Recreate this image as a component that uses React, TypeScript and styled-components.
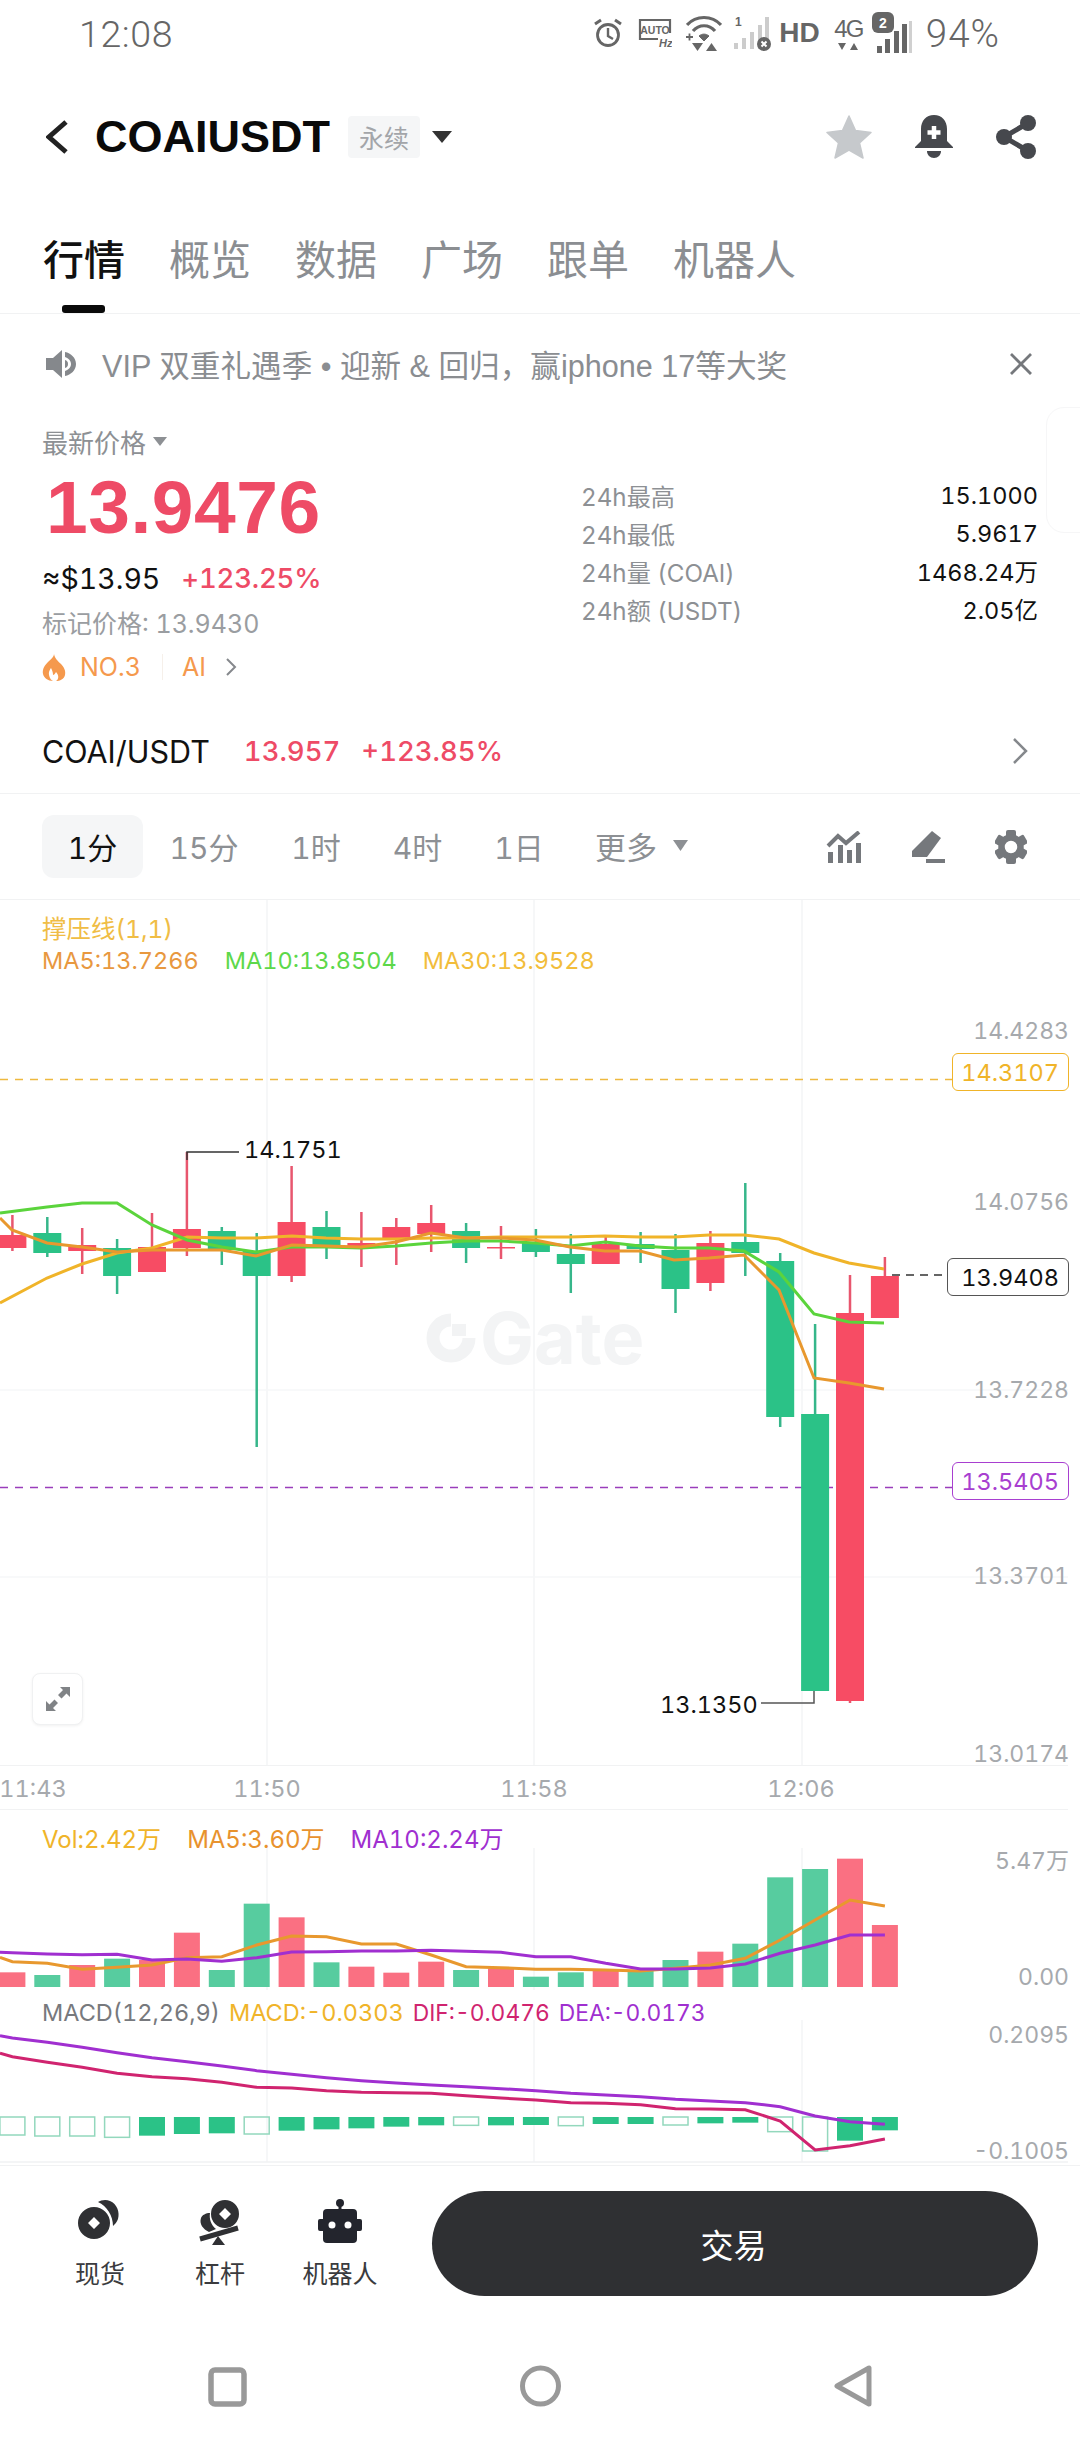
import React from 'react';
import styled, { createGlobalStyle } from 'styled-components';

const GlobalStyle = createGlobalStyle`
  html, body {
    margin: 0;
    padding: 0;
    background: #fff;
  }
  * { box-sizing: border-box; }
  body {
    font-family: Inter, "Noto Sans CJK SC", sans-serif;
    font-variant-numeric: tabular-nums;
  }
`;

const Page = styled.div`
  position: relative;
  width: 1080px;
  height: 2448px;
  overflow: hidden;
  background: #fff;
`;

/* status bar */
const StatusBar = styled.div`
  display: flex;
  align-items: center;
  height: 66px;
  padding: 0 80px 0 79px;
  color: #666;
`;

const Clock = styled.span`
  font-family: Roboto, sans-serif;
  font-weight: 300;
  font-size: 37.5px;
  letter-spacing: 0.6px;
  padding-top: 2px;
`;

const StatusIcons = styled.div`
  display: flex;
  align-items: center;
  margin-left: auto;
`;

const StatusIcon = styled.svg<{ $ml?: number }>`
  display: block;
  flex: none;
  margin-left: ${({ $ml }) => $ml ?? 0}px;
`;

const HdText = styled.span`
  font-family: "Liberation Sans", sans-serif;
  font-weight: 700;
  font-size: 28px;
  margin-left: 8px;
`;

const NetWrap = styled.div`
  display: flex;
  flex-direction: column;
  align-items: center;
  width: 29px;
  margin-left: 14px;
  margin-top: 2px;
`;

const NetText = styled.span`
  font-family: "Liberation Sans", sans-serif;
  font-size: 24px;
  line-height: 20px;
  letter-spacing: -2px;
`;

const Battery = styled.span`
  font-family: Roboto, sans-serif;
  font-weight: 300;
  font-size: 38.5px;
  margin-left: 14px;
  letter-spacing: 1px;
`;

/* header */
const Header = styled.div`
  display: flex;
  align-items: center;
  height: 142px;
  padding: 0 43px 0 46px;
`;

const Title = styled.h1`
  margin: 0 0 0 27px;
  font-family: "Liberation Sans", sans-serif;
  font-weight: 700;
  font-size: 45px;
  color: #0a0a0a;
`;

const PerpTag = styled.span`
  display: flex;
  align-items: center;
  justify-content: center;
  width: 72px;
  height: 42px;
  margin-left: 18px;
  border-radius: 4px;
  background: #f5f6f7;
  color: #a3a5a9;
  font-size: 25px;
`;

const HeaderActions = styled.div`
  display: flex;
  align-items: center;
  margin-left: auto;
  gap: 41px;
`;

/* tabs */
const TabRow = styled.div`
  display: flex;
  gap: 44px;
  height: 106px;
  padding: 27px 0 0 43px;
  border-bottom: 1px solid #f1f2f3;
`;

const Tab = styled.div<{ $active?: boolean }>`
  position: relative;
  height: 50px;
  font-size: 41px;
  line-height: 50px;
  font-weight: ${({ $active }) => ($active ? 500 : 400)};
  color: ${({ $active }) => ($active ? '#111' : '#8b8e92')};

  &::after {
    content: '';
    display: ${({ $active }) => ($active ? 'block' : 'none')};
    position: absolute;
    left: 19px;
    top: 70px;
    width: 43px;
    height: 8px;
    border-radius: 3px;
    background: #0a0a0a;
  }
`;

/* notice */
const Notice = styled.div`
  display: flex;
  align-items: center;
  height: 100px;
  padding: 0 48px 0 46px;
`;

const NoticeText = styled.span`
  margin-left: 25px;
  font-family: "Liberation Sans", "Noto Sans CJK SC", sans-serif;
  font-size: 30.6px;
  color: #8a8d91;
`;

const NoticeClose = styled.svg`
  margin-left: auto;
  display: block;
`;

/* price block */
const PriceSection = styled.div`
  position: relative;
  display: flex;
  height: 295px;
  padding: 12px 42px 0;
`;

const PriceLeft = styled.div`
  display: flex;
  flex-direction: column;
  width: 540px;
`;

const PriceLabel = styled.div`
  display: flex;
  align-items: center;
  gap: 7px;
  height: 30px;
  font-size: 26px;
  color: #8d9094;
`;

const LastPrice = styled.div`
  height: 76px;
  margin-top: 13px;
  font-family: "Liberation Sans", sans-serif;
  font-weight: 700;
  font-size: 75px;
  line-height: 76px;
  letter-spacing: 0.5px;
  padding-left: 4px;
  color: #ee4b66;
`;

const FiatRow = styled.div`
  display: flex;
  align-items: center;
  gap: 21px;
  height: 36px;
  margin-top: 15px;
  font-size: 28.5px;
  color: #111;
`;

const Change = styled.span`
  color: #ee4b66;
  font-weight: 500;
  font-size: 27.5px;
  letter-spacing: -0.2px;
`;

const MarkPrice = styled.div`
  height: 30px;
  margin-top: 13px;
  font-size: 25px;
  line-height: 30px;
  color: #9a9da1;
`;

const RankRow = styled.div`
  display: flex;
  align-items: center;
  height: 36px;
  margin-top: 10px;
  font-size: 25px;
  color: #f5994d;
`;

const RankDivider = styled.span`
  width: 1px;
  height: 26px;
  margin: 0 19px 0 21px;
  background: #f6f0ea;
`;

const StatList = styled.div`
  display: flex;
  flex-direction: column;
  flex: 1;
  padding-top: 50px;
`;

const StatRow = styled.div`
  display: flex;
  justify-content: space-between;
  align-items: center;
  height: 38px;
`;

const StatName = styled.span`
  font-size: 24.2px;
  color: #8d9094;
  margin-left: -1px;
`;

const StatValue = styled.span`
  font-size: 23.5px;
  color: #111;
`;

const EdgeHint = styled.div`
  position: absolute;
  right: -20px;
  top: -7px;
  width: 54px;
  height: 126px;
  border: 1px solid #f6f6f7;
  border-radius: 18px;
`;

/* spot pair */
const PairRow = styled.div`
  display: flex;
  align-items: center;
  height: 85px;
  padding: 0 52px 0 42px;
  border-bottom: 1px solid #f1f2f3;
  font-size: 27.5px;
`;

const PairName = styled.span`
  font-size: 30.5px;
  color: #111;
  margin-right: 34px;
`;

const PairPrice = styled.span`
  color: #ee4b66;
  font-weight: 500;
  margin-right: 21px;
`;

const PairChevron = styled.svg`
  display: block;
  margin-left: auto;
`;

/* period bar */
const PeriodBar = styled.div`
  position: relative;
  display: flex;
  align-items: center;
  height: 106px;
  padding: 0 53px 0 42px;
  border-bottom: 1px solid #f1f2f3;
`;

const Period = styled.div<{ $active?: boolean; $w: number }>`
  display: flex;
  align-items: center;
  justify-content: center;
  width: ${({ $w }) => $w}px;
  height: 63px;
  padding-bottom: 2px;
  border-radius: 12px;
  font-size: 30px;
  background: ${({ $active }) => ($active ? '#f5f6f7' : 'transparent')};
  color: ${({ $active }) => ($active ? '#111' : '#8d9094')};
`;

const MorePeriod = styled(Period)`
  gap: 16px;
  margin-left: 25px;
  font-size: 31px;
  justify-content: flex-start;
`;

const ToolIcons = styled.div`
  display: flex;
  align-items: center;
  gap: 50px;
  margin-left: auto;
`;

/* chart panes */
const Pane = styled.div<{ $h: number }>`
  position: relative;
  height: ${({ $h }) => $h}px;
`;

const PaneSvg = styled.svg`
  display: block;
  position: absolute;
  left: 0;
  top: 0;
`;

const Legend = styled.div<{ $top: number; $size?: number }>`
  position: absolute;
  left: 42px;
  top: ${({ $top }) => $top}px;
  display: flex;
  gap: 26px;
  height: 30px;
  align-items: center;
  font-size: ${({ $size }) => $size ?? 23.5}px;
  white-space: nowrap;
`;

const TightLegend = styled(Legend)`
  gap: 9px;
`;

const LegendItem = styled.span<{ $color: string; $size?: number }>`
  color: ${({ $color }) => $color};
  ${({ $size }) => ($size ? `font-size: ${$size}px;` : '')}
`;

const AxisLabel = styled.span<{ $top: number }>`
  position: absolute;
  right: 11px;
  top: ${({ $top }) => $top - 15}px;
  height: 30px;
  line-height: 30px;
  font-size: 23px;
  color: #a6a9ad;
`;

const PriceTag = styled.span<{ $top: number; $color: string; $w: number }>`
  position: absolute;
  right: 11px;
  top: ${({ $top }) => $top}px;
  width: ${({ $w }) => $w}px;
  height: 38px;
  display: flex;
  align-items: center;
  justify-content: flex-end;
  padding-right: 9px;
  background: #fff;
  border: 1px solid ${({ $color }) => $color};
  border-radius: 6px;
  font-size: 23.5px;
  color: ${({ $color }) => $color};
`;

const LastTag = styled(PriceTag)`
  color: #111;
`;

const PeakLabel = styled.span<{ $left: number; $top: number }>`
  position: absolute;
  left: ${({ $left }) => $left}px;
  top: ${({ $top }) => $top - 15}px;
  height: 30px;
  line-height: 30px;
  font-size: 23.5px;
  color: #111;
`;

const Watermark = styled.span`
  position: absolute;
  left: 480px;
  top: 400px;
  font-weight: 700;
  font-size: 72px;
  line-height: 76px;
  color: #f3f4f5;
`;

const ExpandButton = styled.div`
  position: absolute;
  left: 32px;
  top: 773px;
  width: 51px;
  height: 52px;
  display: flex;
  align-items: center;
  justify-content: center;
  background: #fff;
  border: 1px solid #f0f1f2;
  border-radius: 8px;
  box-shadow: 0 1px 3px rgba(0, 0, 0, 0.06);
`;

const TimeAxis = styled.div`
  position: relative;
  width: 1068px;
  height: 45px;
  border-top: 1px solid #f1f2f3;
  border-bottom: 1px solid #f1f2f3;
`;

const TimeLabel = styled.span<{ $x: number }>`
  position: absolute;
  left: ${({ $x }) => $x}px;
  top: 8px;
  transform: translateX(-50%);
  font-size: 23.5px;
  line-height: 30px;
  color: #a6a9ad;
`;

/* bottom actions */
const BottomBar = styled.div`
  display: flex;
  height: 155px;
  padding: 0 42px 0 40px;
  border-top: 1px solid #f1f2f3;
`;

const BottomItem = styled.div`
  display: flex;
  flex-direction: column;
  align-items: center;
  width: 120px;
  padding-top: 33px;
  font-size: 25px;
  line-height: 30px;
  color: #3a3b3e;
`;

const BottomLabel = styled.span`
  margin-top: 14px;
  white-space: nowrap;
`;

const TradeButton = styled.div`
  display: flex;
  align-items: center;
  justify-content: center;
  width: 606px;
  height: 105px;
  margin-top: 25px;
  margin-left: auto;
  padding-right: 3px;
  border-radius: 53px;
  background: #2f3033;
  color: #fff;
  font-size: 33px;
`;

const NavBar = styled.div`
  display: flex;
  gap: 273px;
  height: 127px;
  padding: 45px 0 0 207px;
`;

/* chart data, in page pixels */
const center = (i: number) => 12.4 + 34.9 * i;
const UP = '#f74c64';
const DOWN = '#2bc287';
const VOL_UP = '#fa7082';
const VOL_DOWN = '#57cc9f';

// [up, top, bottom, high, low]
const candles: [boolean, number, number, number, number][] = [
  [true, 1235, 1248, 1215, 1251],
  [false, 1233, 1253, 1217, 1257],
  [true, 1245, 1251, 1228, 1274],
  [false, 1248, 1276, 1239, 1294],
  [true, 1247, 1272, 1213, 1272],
  [true, 1229, 1248, 1152, 1256],
  [false, 1231, 1250, 1227, 1265],
  [false, 1251, 1276, 1233, 1447],
  [true, 1222, 1276, 1166, 1282],
  [false, 1227, 1247, 1211, 1259],
  [true, 1243, 1247, 1212, 1267],
  [true, 1227, 1240, 1218, 1265],
  [true, 1223, 1234, 1205, 1252],
  [false, 1231, 1248, 1223, 1263],
  [true, 1247, 1248, 1226, 1259],
  [false, 1243, 1252, 1229, 1257],
  [false, 1254, 1264, 1234, 1293],
  [true, 1244, 1264, 1237, 1264],
  [false, 1244, 1249, 1232, 1263],
  [false, 1250, 1289, 1234, 1313],
  [true, 1243, 1283, 1231, 1291],
  [false, 1242, 1253, 1183, 1276],
  [false, 1261, 1417, 1253, 1427],
  [false, 1414, 1691, 1324, 1691],
  [true, 1313, 1701, 1275, 1703],
  [true, 1276, 1318, 1257, 1318],
];

const ma10 = '0,1213 47,1207 82,1203 117,1203 152,1225 187,1240 222,1247 256,1252 292,1247 326,1247 361,1248 396,1246 431,1243 466,1241 501,1241 535,1243 570,1246 605,1242 640,1246 674,1248 709,1248 744,1251 779,1272 814,1314 849,1322 884,1323';
const ma5 = '0,1218 12,1230 47,1243 82,1247 117,1252 152,1250 187,1250 222,1250 256,1256 292,1245 326,1246 361,1247 396,1242 431,1233 466,1238 501,1238 535,1240 570,1247 605,1251 640,1251 674,1260 709,1258 744,1255 779,1290 814,1378 849,1383 884,1389';
const ma30 = '0,1303 47,1278 82,1264 117,1253 152,1248 187,1237 222,1238 256,1238 292,1236 326,1238 361,1239 396,1239 431,1238 466,1238 501,1237 535,1237 570,1237 605,1236 640,1237 674,1237 709,1235 744,1235 779,1239 814,1253 849,1263 884,1269';

const zy = (z: number) => 1660 + z / 3;
const volTops = [937, 945, 915, 896, 900, 818, 930, 731, 772, 907, 920, 938, 905, 930, 925, 950, 937, 928, 930, 900, 875, 851, 652, 627, 596, 795];
const volUp = [1, 0, 1, 0, 1, 1, 0, 0, 1, 0, 1, 1, 1, 0, 1, 0, 0, 1, 0, 0, 1, 0, 0, 0, 1, 1];
const series = (zs: number[], first?: number) => {
  const pts = zs.map((z, i) => `${center(i).toFixed(1)},${zy(z).toFixed(1)}`);
  return (first !== undefined ? [`0,${zy(first).toFixed(1)}`, ...pts] : pts).join(' ');
};
const volMa5 = series([905, 910, 928, 922, 915, 893, 890, 855, 828, 830, 852, 852, 885, 920, 923, 928, 928, 930, 933, 925, 915, 895, 840, 780, 720, 738], 892);
const volMa10 = series([878, 882, 884, 883, 900, 897, 904, 893, 876, 875, 873, 873, 871, 874, 877, 890, 890, 910, 927, 927, 924, 912, 880, 855, 825, 825], 877);

const dea = series([1134, 1147, 1162, 1178, 1193, 1205, 1218, 1232, 1243, 1253, 1262, 1269, 1275, 1280, 1286, 1292, 1300, 1305, 1310, 1318, 1323, 1328, 1340, 1368, 1385, 1393], 1127);
const dif = series([1190, 1207, 1222, 1240, 1250, 1256, 1267, 1282, 1284, 1292, 1297, 1298, 1300, 1307, 1314, 1320, 1328, 1330, 1334, 1346, 1347, 1349, 1383, 1470, 1457, 1437], 1180);

const macdBottoms = [1425, 1428, 1428, 1432, 1427, 1422, 1420, 1422, 1412, 1408, 1405, 1400, 1396, 1396, 1396, 1395, 1397, 1392, 1392, 1395, 1390, 1388, 1415, 1473, 1442, 1411];
const macdHollow = [1, 1, 1, 1, 0, 0, 0, 1, 0, 0, 0, 0, 0, 1, 0, 0, 1, 0, 0, 1, 0, 0, 1, 1, 0, 0];

const GridV: React.FC<{ from: number; to: number }> = ({ from, to }) => (
  <>
    {[267, 534, 802].map((x) => (
      <line key={x} x1={x} x2={x} y1={from} y2={to} stroke="#f3f4f6" strokeWidth="1.5" />
    ))}
  </>
);

const MainChart: React.FC = () => (
  <PaneSvg width="1080" height="865" viewBox="0 900 1080 865">
    <GridV from={900} to={1765} />
    {[1390, 1577].map((y) => (
      <line key={y} x1="0" x2="1068" y1={y} y2={y} stroke="#f6f7f8" strokeWidth="1.5" />
    ))}
    {/* gate watermark mark */}
    <path d="M451 1320a18 18 0 1 0 18 18" fill="none" stroke="#f2f3f4" strokeWidth="13" />
    <rect x="452" y="1324" width="14" height="12" fill="#f2f3f4" />
    <line x1="0" x2="953" y1="1079.5" y2="1079.5" stroke="#eeb93f" strokeWidth="1.5" strokeDasharray="8 7" />
    <line x1="0" x2="953" y1="1487.5" y2="1487.5" stroke="#9a3dbb" strokeWidth="1.5" strokeDasharray="8 7" />
    <line x1="892" x2="947" y1="1275" y2="1275" stroke="#333" strokeWidth="1.5" strokeDasharray="8 6" />
    {candles.map(([up, top, bottom, high, low], i) => {
      const x = center(i);
      const color = up ? UP : DOWN;
      return (
        <g key={i}>
          <line x1={x} x2={x} y1={high} y2={low} stroke={up ? '#e8566e' : '#36b68a'} strokeWidth="2.5" />
          <rect x={x - 14} y={top} width="28" height={Math.max(bottom - top, 1.5)} fill={color} />
        </g>
      );
    })}
    <polyline points={ma30} fill="none" stroke="#f0b429" strokeWidth="3" />
    <polyline points={ma10} fill="none" stroke="#5bd43c" strokeWidth="3" />
    <polyline points={ma5} fill="none" stroke="#e8982e" strokeWidth="3" />
    <polyline points="187,1160 187,1152 239,1152" fill="none" stroke="#333" strokeWidth="1.5" />
    <polyline points="761,1703 814,1703 814,1691" fill="none" stroke="#555" strokeWidth="1.5" />
  </PaneSvg>
);

const VolumeChart: React.FC = () => (
  <PaneSvg width="1080" height="180" viewBox="0 1810 1080 180">
    <GridV from={1848} to={1990} />
    {volTops.map((z, i) => (
      <rect key={i} x={center(i) - 13} y={zy(z)} width="26" height={1987 - zy(z)} fill={volUp[i] ? VOL_UP : VOL_DOWN} />
    ))}
    <polyline points={volMa5} fill="none" stroke="#e8982e" strokeWidth="3" />
    <polyline points={volMa10} fill="none" stroke="#a02fd0" strokeWidth="3" />
  </PaneSvg>
);

const MacdChart: React.FC = () => (
  <PaneSvg width="1080" height="175" viewBox="0 1990 1080 175">
    <GridV from={2020} to={2162} />
    <line x1="0" x2="1068" y1="2162" y2="2162" stroke="#f1f2f3" strokeWidth="1.5" />
    {macdBottoms.map((z, i) =>
      macdHollow[i] ? (
        <rect key={i} x={center(i) - 12.5} y={2117} width="25" height={zy(z) - 2117} fill="none" stroke="#93d8bd" strokeWidth="1.5" />
      ) : (
        <rect key={i} x={center(i) - 13} y={2117} width="26" height={zy(z) - 2117} fill={DOWN} />
      ),
    )}
    <polyline points={dea} fill="none" stroke="#a02fd0" strokeWidth="3" />
    <polyline points={dif} fill="none" stroke="#d0246f" strokeWidth="3" />
  </PaneSvg>
);

const App: React.FC = () => (
  <Page>
    <GlobalStyle />
    <StatusBar>
      <Clock>12:08</Clock>
      <StatusIcons>
        {/* alarm */}
        <StatusIcon width="30" height="30" viewBox="0 0 30 30" fill="none" stroke="#666" strokeWidth="2.8">
          <circle cx="15" cy="17" r="10.5" />
          <polyline points="15,10 15,18 20,21" strokeWidth="2.4" />
          <path d="M2 6l6-4M28 6l-6-4" strokeWidth="3" />
        </StatusIcon>
        {/* auto hz */}
        <StatusIcon $ml={15} width="34" height="30" viewBox="0 0 34 30" fill="none">
          <path d="M20 21H2V2h30v13" stroke="#666" strokeWidth="2.2" />
          <text x="17" y="16" textAnchor="middle" fontFamily="Liberation Sans" fontWeight="700" fontSize="10.5" fill="#666">AUTO</text>
          <text x="21" y="29" fontFamily="Liberation Sans" fontWeight="700" fontStyle="italic" fontSize="11" fill="#666">Hz</text>
        </StatusIcon>
        {/* wifi */}
        <StatusIcon $ml={14} width="36" height="38" viewBox="0 0 36 38" fill="none" stroke="#666" strokeWidth="3.2">
          <path d="M1 11C10 1 26 1 35 11" />
          <path d="M7 17C13 10 23 10 29 17" />
          <path d="M13 22c3-2.5 7-2.5 10 0l-5 5z" fill="#666" strokeWidth="1" />
          <path d="M0 23h7M3.5 19.5v7" strokeWidth="1.8" />
          <path d="M6 29h11l-5.5 8zM20 37h11l-5.5-8z" fill="#666" stroke="none" />
        </StatusIcon>
        {/* sim 1 */}
        <StatusIcon $ml={12} width="37" height="36" viewBox="0 0 37 36">
          <text x="1" y="11" fontFamily="Liberation Sans" fontWeight="700" fontSize="12" fill="#666">1</text>
          <rect x="0" y="28" width="4" height="6" fill="#ccc" />
          <rect x="8" y="23" width="4" height="11" fill="#ccc" />
          <rect x="16" y="17" width="4" height="17" fill="#ccc" />
          <rect x="24" y="10" width="4" height="24" fill="#ccc" />
          <rect x="31" y="2" width="4" height="24" fill="#ccc" />
          <circle cx="30" cy="29" r="7" fill="#666" />
          <path d="M27.5 26.5l5 5M32.5 26.5l-5 5" stroke="#fff" strokeWidth="2" />
        </StatusIcon>
        <HdText>HD</HdText>
        <NetWrap>
          <NetText>4G</NetText>
          <svg width="24" height="8" viewBox="0 0 24 8" style={{ display: 'block', marginTop: 3 }}>
            <path d="M2 1h8l-4 7zM14 8h8l-4-7z" fill="#666" />
          </svg>
        </NetWrap>
        {/* sim 2 */}
        <StatusIcon $ml={9} width="40" height="42" viewBox="0 0 40 42">
          <rect x="5" y="34" width="5" height="7" fill="#666" />
          <rect x="13" y="27" width="5" height="14" fill="#666" />
          <rect x="22" y="19" width="5" height="22" fill="#666" />
          <rect x="30" y="12" width="5" height="29" fill="#666" />
          <rect x="37" y="9" width="3" height="32" fill="#d0d0d0" />
          <rect x="0" y="0" width="22" height="21" rx="6" fill="#666" />
          <text x="11" y="16" textAnchor="middle" fontFamily="Liberation Sans" fontWeight="700" fontSize="14" fill="#fff">2</text>
        </StatusIcon>
        <Battery>94%</Battery>
      </StatusIcons>
    </StatusBar>

    <Header>
      <svg width="22" height="34" viewBox="0 0 22 34" style={{ display: 'block' }}>
        <polyline points="20,2 3,17 20,32" fill="none" stroke="#222" strokeWidth="5" />
      </svg>
      <Title>COAIUSDT</Title>
      <PerpTag>永续</PerpTag>
      <svg width="20" height="12" viewBox="0 0 20 12" style={{ display: 'block', marginLeft: 12 }}>
        <path d="M0 0h20L10 12z" fill="#333" />
      </svg>
      <HeaderActions>
        <svg width="46" height="44" viewBox="0 0 46 44" style={{ marginRight: 1 }}>
          <path d="M23 1l6.5 14.5L45 17.5 33.5 28 37 43 23 35 9 43l3.5-15L1 17.5l15.5-2z" fill="#c6c9cc" stroke="#c6c9cc" strokeWidth="1.5" strokeLinejoin="round" />
        </svg>
        <svg width="40" height="44" viewBox="0 0 40 44">
          <path d="M20 0c-8 0-13 6-13 14v12L1 32v1h38v-1l-6-6V14C33 6 28 0 20 0z" fill="#46484d" />
          <path d="M13 36h14c0 4-3 7-7 7s-7-3-7-7z" fill="#46484d" />
          <path d="M20 11v13M13.5 17.5h13" stroke="#fff" strokeWidth="4.5" />
        </svg>
        <svg width="42" height="44" viewBox="0 0 42 44">
          <path d="M33 8L9 22l24 14" fill="none" stroke="#46484d" strokeWidth="5" />
          <circle cx="33" cy="8" r="8" fill="#46484d" />
          <circle cx="9" cy="22" r="8" fill="#46484d" />
          <circle cx="33" cy="36" r="8" fill="#46484d" />
        </svg>
      </HeaderActions>
    </Header>

    <TabRow>
      <Tab $active>行情</Tab>
      <Tab>概览</Tab>
      <Tab>数据</Tab>
      <Tab>广场</Tab>
      <Tab>跟单</Tab>
      <Tab>机器人</Tab>
    </TabRow>

    <Notice>
      <svg width="31" height="28" viewBox="0 0 31 28" style={{ display: 'block', flex: 'none' }}>
        <path d="M0 8h7l9-8v28l-9-8H0z" fill="#85888c" />
        <path d="M19 2c6 1 11 6 11 12s-5 11-11 12v-5c3-1 6-3.5 6-7s-3-6-6-7z" fill="#85888c" />
        <path d="M19 10c2 .5 3 2 3 4s-1 3.5-3 4z" fill="#85888c" />
      </svg>
      <NoticeText>VIP 双重礼遇季 • 迎新 &amp; 回归，赢iphone 17等大奖</NoticeText>
      <NoticeClose width="22" height="22" viewBox="0 0 22 22">
        <path d="M1 1l20 20M21 1L1 21" stroke="#75787c" strokeWidth="2.8" />
      </NoticeClose>
    </Notice>

    <PriceSection>
      <PriceLeft>
        <PriceLabel>
          最新价格
          <svg width="14" height="9" viewBox="0 0 14 9"><path d="M0 0h14L7 9z" fill="#8d9094" /></svg>
        </PriceLabel>
        <LastPrice>13.9476</LastPrice>
        <FiatRow>
          <span>≈$13.95</span>
          <Change>+123.25%</Change>
        </FiatRow>
        <MarkPrice>标记价格: 13.9430</MarkPrice>
        <RankRow>
          <svg width="24" height="27" viewBox="0 0 24 27" style={{ display: 'block', marginRight: 14 }}>
            <path d="M12 0c1 5 4 7 7 10 3 3 5 7 4 11-1 4-5 6-9 6 3-2 3-6 0-9-1 2-2 3-3 3 0-3-1-5-2-7-2 3-3 5-1 10 1 2 2 2 3 3-5 0-9-3-10-7C0 15 3 11 6 8c3-3 6-5 6-8z" fill="#f5994d" />
          </svg>
          NO.3
          <RankDivider />
          AI
          <svg width="12" height="20" viewBox="0 0 12 20" style={{ display: 'block', marginLeft: 19 }}>
            <polyline points="2,2 10,10 2,18" fill="none" stroke="#85888c" strokeWidth="2" />
          </svg>
        </RankRow>
      </PriceLeft>
      <StatList>
        <StatRow><StatName>24h最高</StatName><StatValue>15.1000</StatValue></StatRow>
        <StatRow><StatName>24h最低</StatName><StatValue>5.9617</StatValue></StatRow>
        <StatRow><StatName>24h量 (COAI)</StatName><StatValue>1468.24万</StatValue></StatRow>
        <StatRow><StatName>24h额 (USDT)</StatName><StatValue>2.05亿</StatValue></StatRow>
      </StatList>
      <EdgeHint />
    </PriceSection>

    <PairRow>
      <PairName>COAI/USDT</PairName>
      <PairPrice>13.957</PairPrice>
      <PairPrice>+123.85%</PairPrice>
      <PairChevron width="16" height="26" viewBox="0 0 16 26">
        <polyline points="2,1 14,13 2,25" fill="none" stroke="#85888c" strokeWidth="2.5" />
      </PairChevron>
    </PairRow>

    <PeriodBar>
      <Period $active $w={101}>1分</Period>
      <Period $w={122}>15分</Period>
      <Period $w={102}>1时</Period>
      <Period $w={101}>4时</Period>
      <Period $w={102}>1日</Period>
      <MorePeriod $w={98}>
        更多
        <svg width="15" height="11" viewBox="0 0 15 11"><path d="M0 0h15L7.5 11z" fill="#8d9094" /></svg>
      </MorePeriod>
      <ToolIcons>
        <svg width="36" height="32" viewBox="0 0 36 32">
          <polyline points="2,15 12,5 20,12 33,1" fill="none" stroke="#75787c" strokeWidth="4" />
          <path d="M2 21h5v11H2zM12 14h5v18h-5zM21 19h5v13h-5zM30 12h5v20h-5z" fill="#75787c" />
        </svg>
        <svg width="33" height="32" viewBox="0 0 33 32">
          <path d="M20 0l9 7L15 26H0v-6z" fill="#75787c" />
          <rect x="14" y="28" width="19" height="4" fill="#75787c" />
        </svg>
        <svg width="32" height="34" viewBox="-16 -17 32 34">
          <g fill="#75787c">
            {[0, 60, 120, 180, 240, 300].map((a) => (
              <rect key={a} x="-5" y="-17" width="10" height="8" rx="2" transform={`rotate(${a})`} />
            ))}
          </g>
          <circle r="9.5" fill="none" stroke="#75787c" strokeWidth="6.5" />
        </svg>
      </ToolIcons>
    </PeriodBar>

    <Pane $h={865}>
      <MainChart />
      <Watermark>Gate</Watermark>
      <Legend $top={12}>
        <LegendItem $color="#f0bd45" $size={24.5}>撑压线(1,1)</LegendItem>
      </Legend>
      <Legend $top={45}>
        <LegendItem $color="#e8983f">MA5:13.7266</LegendItem>
        <LegendItem $color="#5dd84a">MA10:13.8504</LegendItem>
        <LegendItem $color="#f2bd3b">MA30:13.9528</LegendItem>
      </Legend>
      <AxisLabel $top={131}>14.4283</AxisLabel>
      <PriceTag $top={153} $w={117} $color="#f0b429">14.3107</PriceTag>
      <AxisLabel $top={302}>14.0756</AxisLabel>
      <LastTag $top={358} $w={122} $color="#555">13.9408</LastTag>
      <AxisLabel $top={490}>13.7228</AxisLabel>
      <PriceTag $top={562} $w={117} $color="#a83fd0">13.5405</PriceTag>
      <AxisLabel $top={676}>13.3701</AxisLabel>
      <AxisLabel $top={854}>13.0174</AxisLabel>
      <PeakLabel $left={244} $top={250}>14.1751</PeakLabel>
      <PeakLabel $left={660} $top={805}>13.1350</PeakLabel>
      <ExpandButton>
        <svg width="26" height="26" viewBox="0 0 26 26">
          <path d="M15 1h10v10l-3.5-3.5-5 5-3.5-3.5 5-5zM11 25H1V15l3.5 3.5 5-5 3.5 3.5-5 5z" fill="#808386" />
        </svg>
      </ExpandButton>
    </Pane>

    <TimeAxis>
      <TimeLabel $x={33}>11:43</TimeLabel>
      <TimeLabel $x={267}>11:50</TimeLabel>
      <TimeLabel $x={534}>11:58</TimeLabel>
      <TimeLabel $x={801}>12:06</TimeLabel>
    </TimeAxis>

    <Pane $h={180}>
      <VolumeChart />
      <Legend $top={12} $size={24}>
        <LegendItem $color="#f0b429">Vol:2.42万</LegendItem>
        <LegendItem $color="#e8922e">MA5:3.60万</LegendItem>
        <LegendItem $color="#a02fd0">MA10:2.24万</LegendItem>
      </Legend>
      <AxisLabel $top={51}>5.47万</AxisLabel>
      <AxisLabel $top={167}>0.00</AxisLabel>
    </Pane>

    <Pane $h={175}>
      <MacdChart />
      <TightLegend $top={7}>
        <LegendItem $color="#77797d">MACD(12,26,9)</LegendItem>
        <LegendItem $color="#f0b429">MACD:-0.0303</LegendItem>
        <LegendItem $color="#d0246f" $size={22.8}>DIF:-0.0476</LegendItem>
        <LegendItem $color="#a02fd0" $size={22.8}>DEA:-0.0173</LegendItem>
      </TightLegend>
      <AxisLabel $top={45}>0.2095</AxisLabel>
      <AxisLabel $top={161}>-0.1005</AxisLabel>
    </Pane>

    <BottomBar>
      <BottomItem>
        <svg width="46" height="46" viewBox="0 0 46 46">
          <path fillRule="evenodd" d="M17 8a16 16 0 1 1 0 32 16 16 0 0 1 0-32zM17 18l-6 6 6 6 6-6z" fill="#2f3033" />
          <path d="M21 3c3-2 8-3 12-1 7 3 10 11 8 18-1 3-3 5-5 7 0-10-6-20-15-24z" fill="#2f3033" />
        </svg>
        <BottomLabel>现货</BottomLabel>
      </BottomItem>
      <BottomItem>
        <svg width="46" height="46" viewBox="0 0 46 46">
          <path fillRule="evenodd" d="M28 1a14 14 0 1 1 0 28 14 14 0 0 1 0-28zM28 9l-6 6 6 6 6-6z" fill="#2f3033" />
          <path d="M13 14c-1 6 1 12 6 16l-7 3c-6-3-10-8-8-14 1-3 5-5 9-5z" fill="#2f3033" />
          <path d="M3 40l38-11" stroke="#2f3033" strokeWidth="5" />
          <path d="M21 37l7 9H15z" fill="#2f3033" />
        </svg>
        <BottomLabel>杠杆</BottomLabel>
      </BottomItem>
      <BottomItem>
        <svg width="46" height="46" viewBox="0 0 46 46">
          <circle cx="23" cy="4" r="4" fill="#23252d" />
          <rect x="21.5" y="5" width="3" height="6" fill="#23252d" />
          <rect x="6" y="10" width="34" height="34" rx="4" fill="#23252d" />
          <rect x="1" y="20" width="44" height="12" rx="2" fill="#23252d" />
          <circle cx="15" cy="26" r="3.5" fill="#fff" />
          <circle cx="31" cy="26" r="3.5" fill="#fff" />
        </svg>
        <BottomLabel>机器人</BottomLabel>
      </BottomItem>
      <TradeButton>交易</TradeButton>
    </BottomBar>

    <NavBar>
      <svg width="40" height="42" viewBox="0 0 40 42">
        <rect x="4" y="5" width="33" height="34" rx="4" fill="none" stroke="#999" strokeWidth="5.5" />
      </svg>
      <svg width="41" height="42" viewBox="0 0 41 42">
        <circle cx="20.5" cy="21" r="18" fill="none" stroke="#999" strokeWidth="5" />
      </svg>
      <svg width="38" height="42" viewBox="0 0 38 42">
        <path d="M35 3v36L3 21z" fill="none" stroke="#999" strokeWidth="5" strokeLinejoin="round" />
      </svg>
    </NavBar>
  </Page>
);

export default App;
